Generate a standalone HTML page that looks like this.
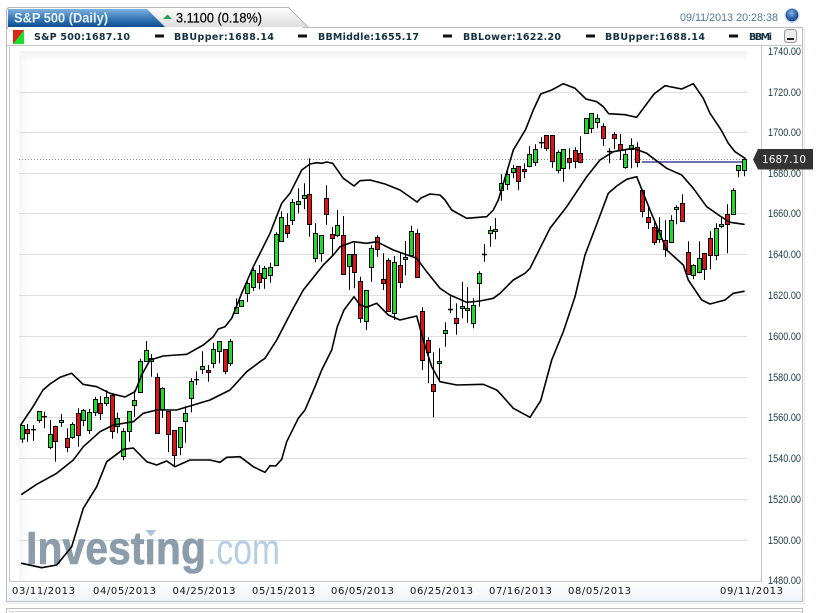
<!DOCTYPE html>
<html lang="en">
<head>
<meta charset="utf-8">
<title>S&amp;P 500 (Daily)</title>
<style>
html,body{margin:0;padding:0;background:#fff;width:818px;height:613px;overflow:hidden}
svg{display:block}
.leg{font:bold 9.5px "DejaVu Sans",sans-serif;fill:#12303f}
.ax{font:11px "Liberation Sans",sans-serif;fill:#1b3a3f}
.dt{font:10px "DejaVu Sans",sans-serif;fill:#111}
</style>
</head>
<body>
<svg xmlns="http://www.w3.org/2000/svg" width="818" height="613" viewBox="0 0 818 613">
<defs>
<linearGradient id="tb" x1="0" y1="0" x2="0" y2="1"><stop offset="0" stop-color="#7fb0de"/><stop offset=".5" stop-color="#3a7bbb"/><stop offset="1" stop-color="#0b4c90"/></linearGradient>
<linearGradient id="tg" x1="0" y1="0" x2="0" y2="1"><stop offset="0" stop-color="#fff"/><stop offset="1" stop-color="#dcdcdc"/></linearGradient>
<linearGradient id="bs" x1="0" y1="0" x2="0" y2="1"><stop offset="0" stop-color="#fff"/><stop offset="1" stop-color="#eef4fa"/></linearGradient>
<linearGradient id="gt" x1="0" y1="0" x2="0" y2="1"><stop offset="0" stop-color="#f1f1f1"/><stop offset="1" stop-color="#f1f1f1" stop-opacity="0"/></linearGradient>
<linearGradient id="gl" x1="0" y1="0" x2="1" y2="0"><stop offset="0" stop-color="#f5f5f5"/><stop offset="1" stop-color="#f5f5f5" stop-opacity="0"/></linearGradient>
<radialGradient id="ball" cx=".45" cy=".35" r=".7"><stop offset="0" stop-color="#8ab4e0"/><stop offset=".6" stop-color="#2a62a8"/><stop offset="1" stop-color="#16407a"/></radialGradient>
</defs>

<!-- panel shadow + outer panel -->
<rect x="804" y="28" width="1" height="575" fill="#e6e6e6"/>
<rect x="7" y="603" width="798" height="1" fill="#e6e6e6"/>
<rect x="6.5" y="27.5" width="796" height="574" fill="#fff" stroke="#bdbdbd"/>
<rect x="7" y="582" width="795" height="19" fill="url(#bs)"/>
<!-- second panel below -->
<path d="M6.5 613V608.5H802.5V613" fill="none" stroke="#bdbdbd"/>
<path d="M9.5 613V611.5H802" fill="none" stroke="#d5d5d5"/>

<!-- tabs -->
<path d="M6.5 27.5V11Q6.5 7.5 10 7.5H288.5L308.5 27.5Z" fill="url(#tg)" stroke="#b5b5b5"/>
<path d="M8 27V9H147L165 27Z" fill="url(#tb)"/>
<rect x="7" y="27" width="296" height="1" fill="#fff"/>
<rect x="7" y="27" width="1" height="2" fill="#bdbdbd"/>
<text x="14" y="22.5" font-family="Liberation Sans,sans-serif" font-size="14" font-weight="bold" fill="#eaf3fb" textLength="94" lengthAdjust="spacingAndGlyphs">S&amp;P 500 (Daily)</text>
<path d="M163 19L167.5 14.5L172 19Z" fill="#2e9e4f"/>
<text x="176" y="22.5" font-family="Liberation Sans,sans-serif" font-size="14" fill="#000" stroke="#000" stroke-width=".2" textLength="86" lengthAdjust="spacingAndGlyphs">3.1100 (0.18%)</text>

<!-- date and ball -->
<text x="680" y="21" font-family="Liberation Sans,sans-serif" font-size="11" fill="#55799c" textLength="98" lengthAdjust="spacingAndGlyphs">09/11/2013 20:28:38</text>
<circle cx="792" cy="15.5" r="7.5" fill="#c9d2dc"/>
<circle cx="792" cy="15" r="6.3" fill="url(#ball)"/>

<!-- legend -->
<path d="M13 30H24V44H13Z" fill="#18e02a"/>
<path d="M13 30H24L13 44Z" fill="#e0261a"/>
<text class="leg" x="34" y="40" textLength="96">S&amp;P 500:1687.10</text>
<rect x="155" y="34.5" width="9" height="3" fill="#111"/>
<text class="leg" x="174" y="40" textLength="100">BBUpper:1688.14</text>
<rect x="298" y="34.5" width="9" height="3" fill="#111"/>
<text class="leg" x="318" y="40" textLength="101">BBMiddle:1655.17</text>
<rect x="443" y="34.5" width="9" height="3" fill="#111"/>
<text class="leg" x="463" y="40" textLength="98">BBLower:1622.20</text>
<rect x="586" y="34.5" width="9" height="3" fill="#111"/>
<text class="leg" x="605" y="40" textLength="100">BBUpper:1688.14</text>
<rect x="729" y="34.5" width="9" height="3" fill="#111"/>
<text class="leg" x="749" y="40" textLength="23">BBMi</text>
<rect x="784.5" y="29.5" width="12" height="13" rx="3" fill="#eee" stroke="#999"/>
<rect x="787" y="38" width="7" height="2" fill="#222"/>
<rect x="7" y="45" width="795" height="1" fill="#c8c8c8"/>

<!-- plot frame -->
<path d="M9.5 46V581.5H761.5V46" fill="#fff" stroke="#c8c8c8"/>
<rect x="19" y="51" width="728" height="11" fill="url(#gt)"/>
<rect x="19" y="51" width="10" height="530" fill="url(#gl)"/>

<!-- grid -->
<path d="M19 92.5H747M19 132.5H747M19 173.5H747M19 213.5H747M19 254.5H747M19 295.5H747M19 336.5H747M19 377.5H747M19 417.5H747M19 458.5H747M19 499.5H747M19 540.5H747" stroke="#dedede" fill="none"/>
<path d="M19 159.5H747" stroke="#8a8a8a" stroke-dasharray="1 2" fill="none"/>

<!-- logo -->
<text x="26" y="564" font-family="Liberation Sans,sans-serif" font-size="46" font-weight="bold" fill="#8b9cab" stroke="#8b9cab" stroke-width=".6" textLength="180" lengthAdjust="spacingAndGlyphs">Investing</text>
<rect x="145" y="528" width="13" height="10" fill="#fff"/>
<path d="M145.5 530H156.5L151 536.5Z" fill="#a6c3de"/>
<text x="207" y="564" font-family="Liberation Sans,sans-serif" font-size="44" fill="#b6cee4" textLength="73" lengthAdjust="spacingAndGlyphs">.com</text>

<!-- price line -->
<path d="M642 162H745" stroke="#1a1a8c" stroke-width="1.2" fill="none"/>

<!-- wicks -->
<path fill="none" stroke="#000" stroke-width="1" d="M22.5 425.7V443M27.5 424V441.7M33.5 425V440.7M39.5 411V422.7M44.5 411.7V428.3M50.5 420V449.3M55.5 425.7V461.7M61.5 414V426.7M67.5 428.3V452.3M72.5 422.3V438.7M78.5 408.3V446.7M83.5 409V426M89.5 409V434M95.5 396.7V416M100.5 396V420M106.5 390V406M112.5 393.3V438.7M117.5 412.7V433.3M123.5 428.3V460.3M129.5 411V441.7M134.5 390V416.7M140.5 358.7V392.3M146.5 341V361.3M151.5 354.3V376.7M157.5 373.3V433.3M162.5 387.3V418M168.5 411V452.3M174.5 430V466.7M180.5 427V455.3M185.5 406.3V442.7M191.5 378.3V412.3M196.5 371.3V385M202.5 351.3V374M208.5 365V381.7M213.5 342.7V368.3M219.5 341V363.3M225.5 349V374.3M230.5 339V366M236.5 298.3V314M241.5 300V307M247.5 281.7V302M253.5 268.3V290.7M259.5 265V289.3M264.5 266V288.7M270.5 262.7V282.7M276.5 232.3V265.3M281.5 211.3V241.3M287.5 213.3V238M292.5 199V225M298.5 188.3V213.3M304.5 183.3V209.3M309.5 158.3V236.7M315.5 223.3V262.3M321.5 235V261.7M326.5 185.3V224.7M332.5 227V255.3M337.5 210V237.3M343.5 216V274.3M349.5 254V290M354.5 242.7V288.3M360.5 276.7V322.7M366.5 290V330M371.5 245.3V281.7M377.5 235.3V256.7M383.5 253.3V290M388.5 258.3V311.3M394.5 256V320M400.5 253.3V288M405.5 241V275.3M411.5 225.7V255.3M417.5 229.3V277.3M422.5 307.3V370M428.5 337.3V383.3M433.5 352.3V417.3M439.5 348.3V381.7M445.5 322.3V346.7M450.5 296.3V313.3M456.5 303.3V334.7M462.5 281.7V318.3M467.5 287.3V322.7M473.5 298.3V328.3M479.5 271.3V306.7M484.5 244.3V261.7M490.5 226V246.7M495.5 218V239.3M501.5 174V200.7M507.5 170V190M513.5 165V178.3M518.5 166V190M524.5 163.3V178.3M529.5 146.3V167.3M535.5 144.3V166M541.5 137.3V148.3M546.5 135V150.7M552.5 135V167.7M558.5 150.3V173.3M563.5 149V181.7M569.5 148.3V169.3M575.5 147.3V168.3M580.5 136.3V163.3M586.5 118V133.5M591.5 113V133.3M597.5 114.3V128.3M603.5 123.3V146M609.5 148.3V163.3M614.5 132.3V149.3M620.5 134.3V160M625.5 150.3V168.7M631.5 138.3V168.3M637.5 142.3V167.3M642.5 190.7V217.3M648.5 205V229M654.5 222.3V245M659.5 217.3V242.7M665.5 220.3V256.7M671.5 215.3V242.3M676.5 205.3V224.3M682.5 194.3V221.3M688.5 241.3V274.3M693.5 264.3V279.3M699.5 241.3V273.3M704.5 253V280M710.5 231.3V269.3M716.5 223.3V260.3M721.5 217.3V228.3M727.5 204.3V253.3M733.5 188.3V214.3M738.5 165V177.3M744.5 159V176.3"/>
<!-- doji dashes -->
<path fill="none" stroke="#000" stroke-width="1.4" d="M31 429.7H36M42 416.7H47M194 379.7H199M448 309.5H453M482 254.5H487M539 142.7H544M607 151.5H612"/>
<!-- green bodies -->
<path fill="#1fdc28" stroke="#000" stroke-width="1" d="M20.5 425.5h4v13.5h-4zM37.5 411.5h4v9h-4zM48.5 434.5h4v13h-4zM59.5 420.5h4v2h-4zM70.5 424.5h4v13h-4zM81.5 410.5h4v10h-4zM87.5 412.5h4v18h-4zM93.5 399.5h4v13h-4zM104.5 397.5h4v6h-4zM115.5 418.5h4v8h-4zM121.5 431.5h4v25h-4zM127.5 411.5h4v20h-4zM132.5 400.5h4v5h-4zM138.5 361.5h4v31h-4zM144.5 350.5h4v11h-4zM149.5 358.5h4v3h-4zM160.5 388.5h4v21h-4zM178.5 427.5h4v20h-4zM183.5 413.5h4v8h-4zM189.5 381.5h4v17h-4zM200.5 366.5h4v3h-4zM211.5 349.5h4v14h-4zM217.5 341.5h4v10h-4zM228.5 341.5h4v22h-4zM234.5 307.5h4v6h-4zM239.5 300.5h4v6h-4zM245.5 283.5h4v10h-4zM251.5 270.5h4v17h-4zM262.5 268.5h4v10h-4zM268.5 267.5h4v8h-4zM274.5 234.5h4v31h-4zM279.5 217.5h4v24h-4zM290.5 202.5h4v18h-4zM296.5 201.5h4v3h-4zM302.5 195.5h4v3h-4zM313.5 233.5h4v25h-4zM319.5 235.5h4v18h-4zM335.5 225.5h4v10h-4zM347.5 254.5h4v12h-4zM364.5 290.5h4v31h-4zM369.5 248.5h4v19h-4zM392.5 262.5h4v51h-4zM403.5 257.5h4v2h-4zM409.5 231.5h4v24h-4zM437.5 361.5h4v2h-4zM443.5 330.5h4v3h-4zM460.5 306.5h4v2h-4zM465.5 308.5h4v2h-4zM471.5 305.5h4v18h-4zM477.5 273.5h4v10h-4zM488.5 230.5h4v3h-4zM493.5 229.5h4v2h-4zM499.5 183.5h4v7h-4zM505.5 174.5h4v10h-4zM511.5 168.5h4v4h-4zM527.5 154.5h4v12h-4zM533.5 149.5h4v13h-4zM556.5 152.5h4v18h-4zM561.5 149.5h4v19h-4zM584.5 118.5h4v15h-4zM589.5 113.5h4v15h-4zM595.5 118.5h4v4h-4zM623.5 154.5h4v13h-4zM629.5 145.5h4v4h-4zM657.5 230.5h4v9h-4zM669.5 220.5h4v22h-4zM674.5 207.5h4v2h-4zM691.5 265.5h4v10h-4zM697.5 258.5h4v14h-4zM714.5 228.5h4v27h-4zM719.5 224.5h4v2h-4zM731.5 190.5h4v24h-4zM736.5 165.5h4v5h-4zM742.5 159.5h4v11h-4z"/>
<!-- red bodies -->
<path fill="#dd1414" stroke="#000" stroke-width="1" d="M25.5 429.5h4v4h-4zM53.5 426.5h4v15h-4zM65.5 438.5h4v9h-4zM76.5 413.5h4v22h-4zM98.5 403.5h4v10h-4zM110.5 395.5h4v36h-4zM155.5 377.5h4v56h-4zM166.5 411.5h4v23h-4zM172.5 430.5h4v25h-4zM206.5 370.5h4v2h-4zM223.5 349.5h4v22h-4zM257.5 273.5h4v9h-4zM285.5 225.5h4v8h-4zM307.5 194.5h4v30h-4zM324.5 198.5h4v16h-4zM330.5 234.5h4v4h-4zM341.5 235.5h4v39h-4zM352.5 254.5h4v18h-4zM358.5 281.5h4v37h-4zM375.5 237.5h4v12h-4zM381.5 279.5h4v4h-4zM386.5 260.5h4v51h-4zM398.5 265.5h4v17h-4zM415.5 233.5h4v44h-4zM420.5 311.5h4v49h-4zM426.5 340.5h4v12h-4zM431.5 384.5h4v7h-4zM454.5 318.5h4v5h-4zM516.5 166.5h4v15h-4zM522.5 169.5h4v2h-4zM544.5 135.5h4v13h-4zM550.5 135.5h4v26h-4zM567.5 158.5h4v4h-4zM573.5 150.5h4v11h-4zM578.5 153.5h4v9h-4zM601.5 126.5h4v12h-4zM612.5 134.5h4v4h-4zM618.5 144.5h4v6h-4zM635.5 147.5h4v15h-4zM640.5 190.5h4v21h-4zM646.5 217.5h4v5h-4zM652.5 227.5h4v15h-4zM663.5 240.5h4v9h-4zM680.5 203.5h4v18h-4zM686.5 252.5h4v22h-4zM702.5 253.5h4v16h-4zM708.5 238.5h4v17h-4zM725.5 214.5h4v10h-4z"/>

<!-- bands -->
<g fill="none" stroke="#000" stroke-width="1.6" stroke-linejoin="round" stroke-linecap="round">
<path d="M20.7 425L33 406.7L43 390L50 384L60 377.3L71.7 373.3L83 384.3L96.7 386.7L110 393.3L125 397L135 391.7L141.7 375L150 360L163.3 356L176.7 355L186.7 354.3L203.3 345L213.3 336.7L218.3 329L225 326.7L231.7 318.3L241.7 293.3L253.3 266.7L270 233.3L281.7 203.3L290 193.3L301.7 170L310 164L316.7 162.7L321.7 163.3L326.7 162L332.7 163.3L343.3 178.3L354 186L360 180.7L370 180L385 184L400 190L410 197L417 202L421 198L430 194L440 195L445 200L451.7 210L466.7 218.3L486.7 216.7L493.3 210L498.3 200L505 178L513.3 150L525.7 129.3L533.3 110L540.7 94L551.7 90L563.3 83.7L575 88.3L586 99L596.7 101.7L603.3 106.7L608.7 113.7L625 114.7L636.7 117.3L654 94L665 85.7L681.7 89L693.3 83.7L703.3 98.3L710 113.3L720.7 129.3L728.3 143.3L735 151.7L745 158.3"/>
<path d="M21.7 494.3L36.7 484.3L56.7 473.3L73.3 460L83.3 446.7L100 431.7L113.3 425L133.3 421.7L143.3 413.3L156.7 410L176.7 410L190 406L210 400L230 390L246.7 371.7L260 361.7L265 358.3L276.7 340L292.3 310L303.3 290L323.3 265L333.3 255L340 246.7L353.3 241.7L366.7 243.3L376.7 241.7L393.3 250L416.7 258.3L426.7 271.7L440 288.3L450 295L466.7 302.3L480 301L493.3 298.3L500 293.3L513.3 280L525 273.3L530 268.3L550 228.3L566.7 206.7L586.7 176.7L600 160L613.3 151.7L633.3 148.3L646.7 153.3L653.3 158.3L666.7 168.3L681.7 175L693.3 188.3L706.7 206.7L720 216L730 222.3L744 224.3"/>
<path d="M21.7 563.3L41.7 567.7L56.7 565L71.7 546.7L83.3 508.3L96.7 486.7L106.7 461.7L123.3 449.3L133.3 448L146.7 461.7L156.7 465L166.7 461L175 466.7L190 460L210 460L220 462.3L226.7 457.3L240 456.7L253.3 466.7L260 470L265 472.3L270 465.7L275.7 466L281.7 459.3L286.7 441.7L298.3 418.3L305 410L315 386.7L321.7 370L331.7 350L337.3 326.7L344 310L354 296.7L360 305L366.7 307.3L376.7 303.3L388.3 315L400 320L416.7 316L423.3 340L431.7 366.7L440 381.7L456.7 385L483.3 384.3L496.7 390L500 393.3L513.3 408.3L530 417.3L540.7 400.7L551.7 360L563.3 331.7L575 296.7L585 255L598.3 220L608.3 193.3L616.7 186L626.7 179.3L636.7 176.7L650 210L666.7 250L683.3 265L688.3 280L701.7 300L710 304L725 300L733.3 293.3L744 291.3"/>
</g>

<!-- price axis -->
<g>
<text class="ax" x="768" y="55" textLength="33" lengthAdjust="spacingAndGlyphs">1740.00</text>
<text class="ax" x="768" y="96" textLength="33" lengthAdjust="spacingAndGlyphs">1720.00</text>
<text class="ax" x="768" y="136" textLength="33" lengthAdjust="spacingAndGlyphs">1700.00</text>
<text class="ax" x="768" y="177" textLength="33" lengthAdjust="spacingAndGlyphs">1680.00</text>
<text class="ax" x="768" y="217" textLength="33" lengthAdjust="spacingAndGlyphs">1660.00</text>
<text class="ax" x="768" y="258" textLength="33" lengthAdjust="spacingAndGlyphs">1640.00</text>
<text class="ax" x="768" y="299" textLength="33" lengthAdjust="spacingAndGlyphs">1620.00</text>
<text class="ax" x="768" y="340" textLength="33" lengthAdjust="spacingAndGlyphs">1600.00</text>
<text class="ax" x="768" y="381" textLength="33" lengthAdjust="spacingAndGlyphs">1580.00</text>
<text class="ax" x="768" y="421" textLength="33" lengthAdjust="spacingAndGlyphs">1560.00</text>
<text class="ax" x="768" y="462" textLength="33" lengthAdjust="spacingAndGlyphs">1540.00</text>
<text class="ax" x="768" y="503" textLength="33" lengthAdjust="spacingAndGlyphs">1520.00</text>
<text class="ax" x="768" y="544" textLength="33" lengthAdjust="spacingAndGlyphs">1500.00</text>
<text class="ax" x="768" y="584" textLength="33" lengthAdjust="spacingAndGlyphs">1480.00</text>
</g>

<!-- price tag -->
<path d="M753 159.5L758 149H813V169.5H758Z" fill="#333"/>
<text x="762" y="163" font-family="DejaVu Sans,sans-serif" font-size="10.5" fill="#fff" textLength="44">1687.10</text>

<!-- date axis -->
<text class="dt" x="12" y="594" textLength="63">03/11/2013</text>
<text class="dt" x="93" y="594" textLength="63">04/05/2013</text>
<text class="dt" x="172.500" y="594" textLength="63">04/25/2013</text>
<text class="dt" x="252" y="594" textLength="63">05/15/2013</text>
<text class="dt" x="331" y="594" textLength="63">06/05/2013</text>
<text class="dt" x="410" y="594" textLength="63">06/25/2013</text>
<text class="dt" x="489" y="594" textLength="63">07/16/2013</text>
<text class="dt" x="568" y="594" textLength="63">08/05/2013</text>
<text class="dt" x="720" y="594" textLength="63">09/11/2013</text>
</svg>
</body>
</html>
